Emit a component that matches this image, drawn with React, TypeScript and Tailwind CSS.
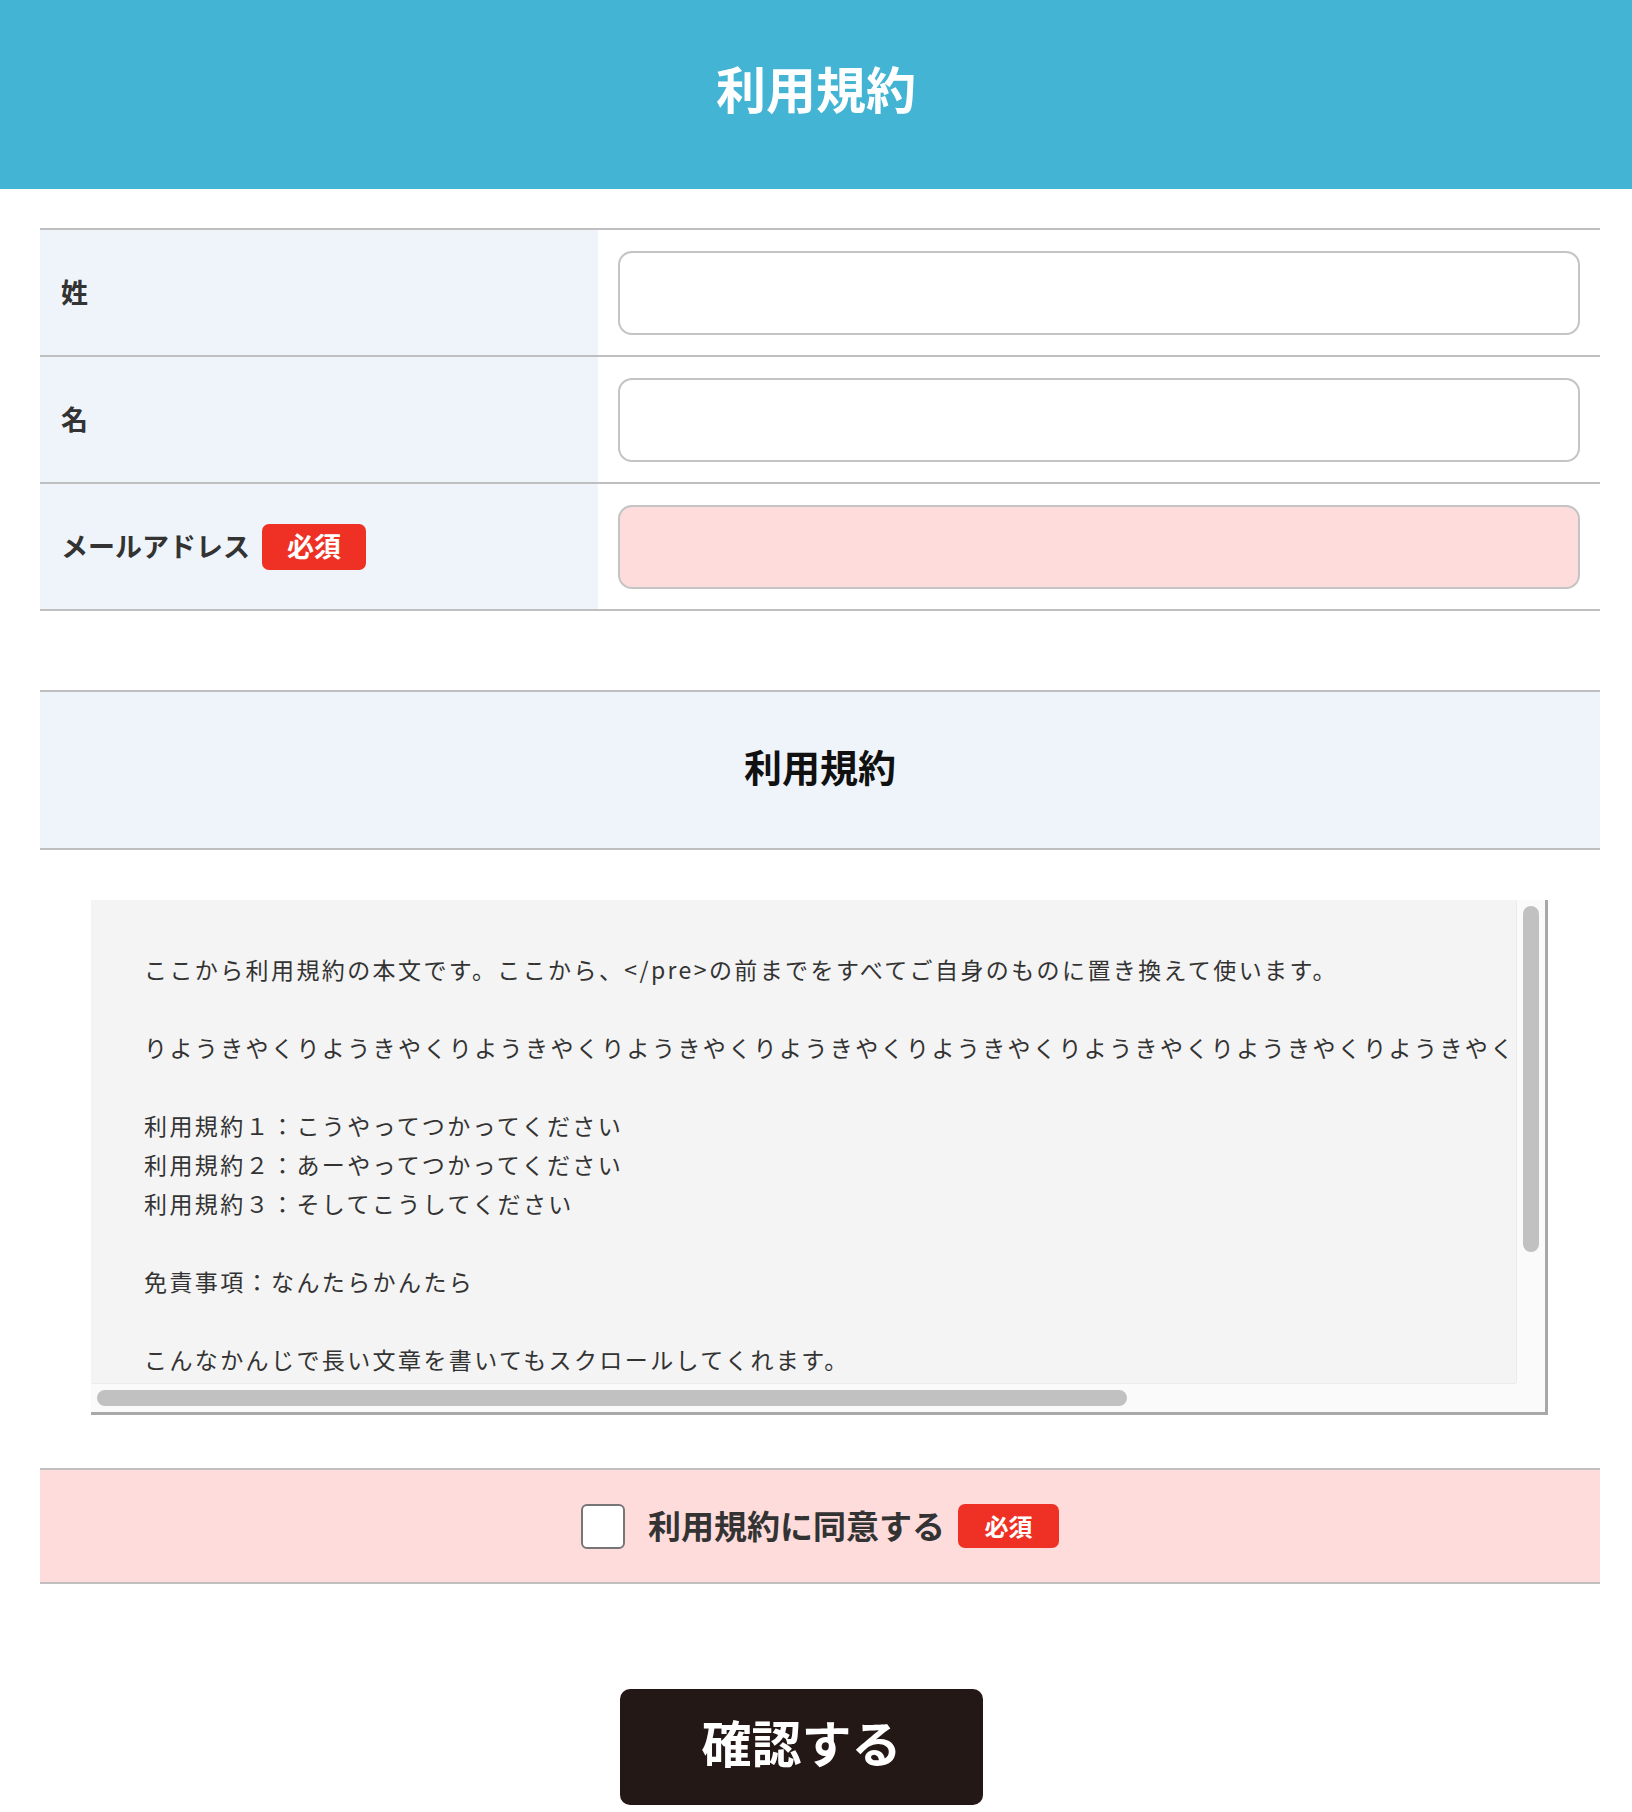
import React, { useState } from 'react';

const font = { fontFamily: '"Noto Sans CJK JP", "Noto Sans", sans-serif' };

const terms = [
  'ここから利用規約の本文です。ここから、</pre>の前までをすべてご自身のものに置き換えて使います。',
  '',
  'りようきやく'.repeat(14),
  '',
  '利用規約１：こうやってつかってください',
  '利用規約２：あーやってつかってください',
  '利用規約３：そしてこうしてください',
  '',
  '免責事項：なんたらかんたら',
  '',
  'こんなかんじで長い文章を書いてもスクロールしてくれます。',
].join('\n');

function Badge({ size = 'lg' }: { size?: 'lg' | 'sm' }) {
  return size === 'lg' ? (
    <span className="inline-flex h-[46px] w-[104px] items-center justify-center rounded-[7px] bg-[#ee3124] text-[27px] font-bold text-white">
      必須
    </span>
  ) : (
    <span className="inline-flex h-[44px] w-[101px] items-center justify-center rounded-[7px] bg-[#ee3124] text-[24px] font-bold text-white">
      必須
    </span>
  );
}

function Row({ label, required, pink }: { label: string; required?: boolean; pink?: boolean }) {
  const [value, setValue] = useState('');
  return (
    <div className="flex h-[127px] border-b-2 border-[#bfbfbf]">
      <div className="flex w-[558px] items-center gap-3 bg-[#eff4fb] pl-[21px]">
        <span className="text-[27px] font-bold text-[#333]">{label}</span>
        {required && <Badge />}
      </div>
      <div className="flex flex-1 items-center px-5">
        <input
          value={value}
          onChange={(e) => setValue(e.target.value)}
          className={`h-[84px] w-full rounded-[14px] border-2 border-[#c4c4c4] px-4 text-[26px] outline-none ${
            pink ? 'bg-[#ffdcdc]' : 'bg-white'
          }`}
        />
      </div>
    </div>
  );
}

export default function App() {
  const [agree, setAgree] = useState(false);
  return (
    <div className="min-h-[1812px] bg-white" style={font}>
      {/* ヘッダー */}
      <header className="flex h-[189px] items-center justify-center bg-[#43b4d4]">
        <h1 className="mb-[14px] text-[50px] font-bold text-white">利用規約</h1>
      </header>

      <div className="ml-10 w-[1560px]">
        {/* 入力フォーム */}
        <section className="mt-[39px] border-t-2 border-[#bfbfbf]">
          <Row label="姓" />
          <Row label="名" />
          <Row label="メールアドレス" required pink />
        </section>

        {/* 利用規約 */}
        <div className="mt-[79px] flex h-[160px] items-center justify-center border-y-2 border-[#bfbfbf] bg-[#eff4fb]">
          <h2 className="mb-[10px] text-[38px] font-bold text-[#111]">利用規約</h2>
        </div>

        <div className="ml-[51px] mt-[50px] w-[1457px] border-r-[3px] border-b-[3px] border-[#a8a8a8] bg-[#fafafa]">
          <div className="flex">
            <pre
              className="h-[483px] w-[1425px] overflow-hidden bg-[#f4f4f4] pl-[53px] pt-[11px] text-[23px] leading-[39px] tracking-[2.4px] text-[#333]"
              style={font}
            >
              {'\n' + terms}
            </pre>
            <div className="flex w-[29px] justify-center border-l border-[#ececec] pt-[6px]">
              <div className="h-[346px] w-[16px] rounded-full bg-[#c1c1c1]" />
            </div>
          </div>
          <div className="flex h-[29px]">
            <div className="flex w-[1425px] items-center border-t border-[#ececec] pl-[6px]">
              <div className="h-[16px] w-[1030px] rounded-full bg-[#c1c1c1]" />
            </div>
            <div className="w-[29px]" />
          </div>
        </div>

        {/* 同意 */}
        <div className="mt-[53px] flex h-[116px] items-center justify-center border-y-2 border-[#bfbfbf] bg-[#ffdcdc]">
          <label className="flex cursor-pointer items-center">
            <input
              type="checkbox"
              checked={agree}
              onChange={(e) => setAgree(e.target.checked)}
              className="h-[45px] w-[44px] cursor-pointer appearance-none rounded-[6px] border-2 border-[#767676] bg-white checked:bg-[#43b4d4]"
            />
            <span className="ml-[23px] text-[33px] font-bold text-[#333]">利用規約に同意する</span>
            <span className="ml-[13px]">
              <Badge size="sm" />
            </span>
          </label>
        </div>

        <div className="mt-[105px] flex justify-center pr-[37px]">
          <button className="flex h-[116px] w-[363px] items-center justify-center rounded-[10px] bg-[#231815] pb-[12px] text-[50px] font-bold text-white">
            確認する
          </button>
        </div>
      </div>
    </div>
  );
}
